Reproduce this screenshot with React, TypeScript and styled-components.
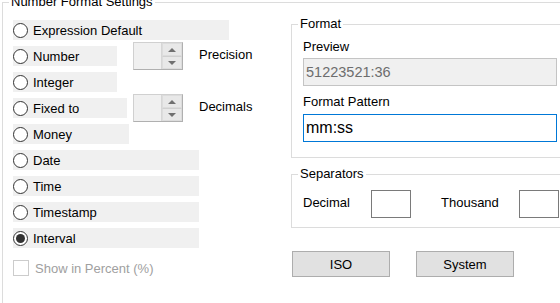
import React from 'react';
import styled, { createGlobalStyle } from 'styled-components';

const Global = createGlobalStyle`
  html, body { margin: 0; padding: 0; background: #fff; overflow: hidden; }
  body {
    width: 560px; height: 303px;
    font-family: "Liberation Sans", Arial, sans-serif;
    font-size: 13px; color: #000;
  }
  * { box-sizing: border-box; }
`;

const Group = styled.fieldset<{ $w: number; $h?: number }>`
  margin: 0;
  padding: 0;
  min-width: 0;
  width: ${p => p.$w}px;
  ${p => (p.$h ? `height: ${p.$h}px;` : '')}
  border: 1px solid #dcdcdc;
`;

const OuterGroup = styled(Group)`
  margin: -5px 0 0 2px;
`;

const SepGroup = styled(Group)`
  margin-top: 9px;
`;

const Legend = styled.legend<{ $indent: number }>`
  padding: 0 2px;
  margin-left: ${p => p.$indent}px;
  line-height: 14px;
  font-size: 13px;
  color: #000;
`;

const Columns = styled.div`
  display: flex;
`;

const LeftCol = styled.div`
  width: 288px;
  padding: 11px 0 0 10px;
  display: flex;
  flex-direction: column;
  gap: 6px;
`;

const RightCol = styled.div`
  padding-top: 8px;
  display: flex;
  flex-direction: column;
`;

const Line = styled.div`
  display: flex;
  align-items: center;
  height: 20px;
`;

const Cell = styled.div`
  width: 120px;
  height: 20px;
`;

const Option = styled.label<{ $w: number }>`
  display: flex;
  align-items: center;
  gap: 5px;
  height: 20px;
  width: ${p => p.$w}px;
  background: #f0f0f0;
  white-space: nowrap;
`;

const Radio = styled.span<{ $on?: boolean }>`
  position: relative;
  width: 15px;
  height: 15px;
  flex: none;
  border-radius: 50%;
  border: 1px solid #333;
  background: #fff;
  &::after {
    content: '';
    display: ${p => (p.$on ? 'block' : 'none')};
    position: absolute;
    left: 2px; top: 2px;
    width: 9px; height: 9px;
    border-radius: 50%;
    background: #333;
  }
`;

const Spin = styled.div`
  display: flex;
  width: 50px;
  height: 28px;
  flex: none;
  border: 1px solid;
  border-color: #d0d0d0 #b0b0b0 #b0b0b0 #d0d0d0;
  background: #f0f0f0;
`;

const SpinField = styled.div`
  flex: 1;
`;

const SpinButtons = styled.div`
  width: 21px;
  display: flex;
  flex-direction: column;
  border-left: 1px solid #d6d6d6;
`;

const SpinBtn = styled.div<{ $down?: boolean }>`
  flex: 1;
  display: flex;
  align-items: center;
  justify-content: center;
  background: #e8e8e8;
  border: 1px solid #dcdcdc;
  ${p => (p.$down ? 'border-top: 1px solid #d0d0d0;' : '')}
  &::before {
    content: '';
    width: 0; height: 0;
    border-left: 4px solid transparent;
    border-right: 4px solid transparent;
    ${p => (p.$down ? 'border-top: 4px solid #707070;' : 'border-bottom: 4px solid #707070;')}
  }
`;

const SideLabel = styled.span`
  margin-left: 16px;
  padding-bottom: 3px;
`;

const CheckRow = styled.label`
  display: flex;
  align-items: center;
  gap: 6px;
  margin-top: 6px;
  height: 16px;
  color: #a0a0a0;
`;

const CheckBox = styled.span`
  width: 16px;
  height: 16px;
  border: 1px solid #cccccc;
  background: #fff;
`;

const GroupBody = styled.div<{ $pad: string }>`
  padding: ${p => p.$pad};
  display: flex;
  flex-direction: column;
`;

const FieldLabel = styled.div<{ $gap: number }>`
  line-height: 15px;
  margin-top: ${p => p.$gap}px;
`;

const Preview = styled.div`
  margin-top: 4px;
  height: 28px;
  border: 1px solid #c4c4c4;
  background: #f0f0f0;
  color: #6d6d6d;
  font-size: 14.5px;
  display: flex;
  align-items: center;
  padding-left: 2px;
`;

const PatternInput = styled.div`
  margin-top: 5px;
  height: 28px;
  border: 1px solid #0078d7;
  background: #fff;
  color: #000;
  font-size: 16px;
  display: flex;
  align-items: center;
  padding-left: 2px;
`;

const SepRow = styled.div`
  display: flex;
  align-items: center;
  height: 28px;
`;

const SepLabel = styled.span<{ $w: number; $lead?: number }>`
  width: ${p => p.$w}px;
  margin-left: ${p => p.$lead ?? 0}px;
  padding-bottom: 4px;
`;

const SepBox = styled.div`
  width: 40px;
  height: 28px;
  border: 1px solid #7a7a7a;
  background: #fff;
`;

const Buttons = styled.div`
  display: flex;
  gap: 26px;
  margin-top: 23px;
  padding-left: 1px;
`;

const Button = styled.button`
  width: 98px;
  height: 26px;
  background: #e1e1e1;
  border: 1px solid #adadad;
  font-family: "Liberation Sans", Arial, sans-serif;
  font-size: 13px;
  color: #000;
  padding: 0;
`;

const SpinBox = () => (
  <Spin>
    <SpinField />
    <SpinButtons>
      <SpinBtn />
      <SpinBtn $down />
    </SpinButtons>
  </Spin>
);

export default function App() {
  return (
    <>
      <Global />
      <OuterGroup $w={600} $h={320}>
        <Legend $indent={6}>Number Format Settings</Legend>
        <Columns>
          <LeftCol>
            <Option $w={216}><Radio />Expression Default</Option>
            <Line>
              <Cell><Option $w={104}><Radio />Number</Option></Cell>
              <SpinBox />
              <SideLabel>Precision</SideLabel>
            </Line>
            <Option $w={104}><Radio />Integer</Option>
            <Line>
              <Cell><Option $w={114}><Radio />Fixed to</Option></Cell>
              <SpinBox />
              <SideLabel>Decimals</SideLabel>
            </Line>
            <Option $w={116}><Radio />Money</Option>
            <Option $w={186}><Radio />Date</Option>
            <Option $w={186}><Radio />Time</Option>
            <Option $w={186}><Radio />Timestamp</Option>
            <Option $w={186}><Radio $on />Interval</Option>
            <CheckRow><CheckBox />Show in Percent (%)</CheckRow>
          </LeftCol>
          <RightCol>
            <Group $w={278}>
              <Legend $indent={6}>Format</Legend>
              <GroupBody $pad="0 11px 15px 11px">
                <FieldLabel $gap={8}>Preview</FieldLabel>
                <Preview>51223521:36</Preview>
                <FieldLabel $gap={8}>Format Pattern</FieldLabel>
                <PatternInput>mm:ss</PatternInput>
              </GroupBody>
            </Group>
            <SepGroup $w={278}>
              <Legend $indent={6}>Separators</Legend>
              <GroupBody $pad="9px 0 9px 11px">
                <SepRow>
                  <SepLabel $w={68}>Decimal</SepLabel>
                  <SepBox />
                  <SepLabel $w={78} $lead={30}>Thousand</SepLabel>
                  <SepBox />
                </SepRow>
              </GroupBody>
            </SepGroup>
            <Buttons>
              <Button>ISO</Button>
              <Button>System</Button>
            </Buttons>
          </RightCol>
        </Columns>
      </OuterGroup>
    </>
  );
}
